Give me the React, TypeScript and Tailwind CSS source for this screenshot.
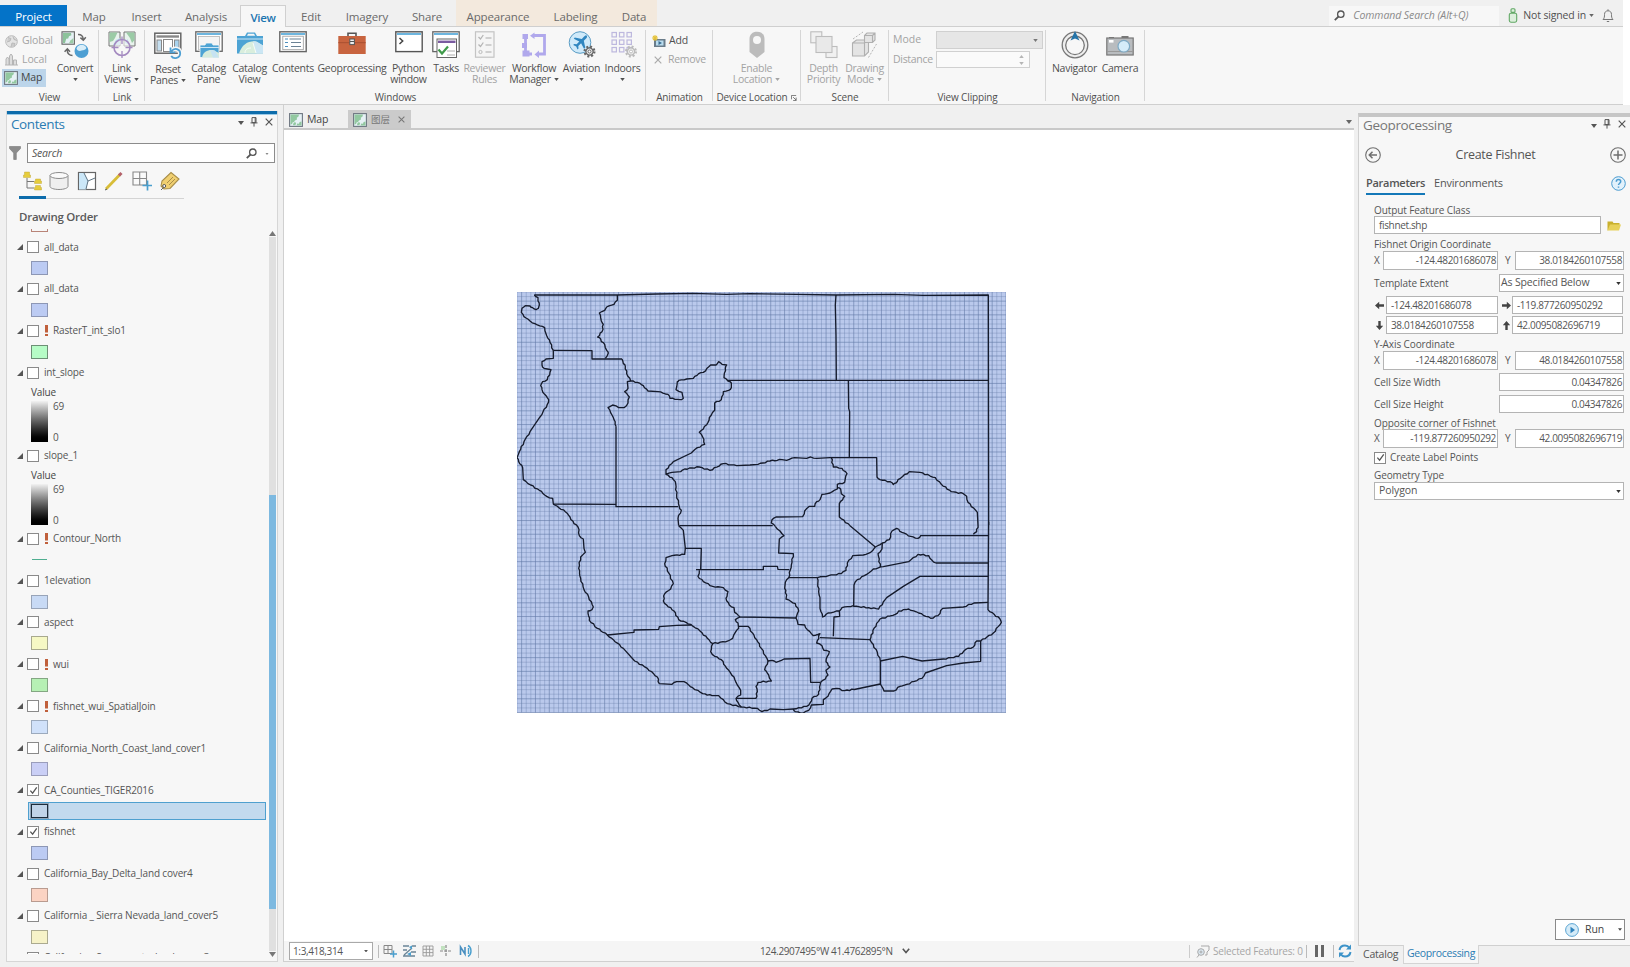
import type { ReactNode } from "react";

/* ---------- small shared glyphs ---------- */

const Caret = ({ className = "" }: { className?: string }) => (
  <svg viewBox="0 0 6 4" className={"w-[5px] h-[3px] shrink-0 " + className} fill="currentColor">
    <path d="M0 0h6L3 4z" />
  </svg>
);

const MapGlyph = ({ className = "size-[14px]" }: { className?: string }) => (
  <svg viewBox="0 0 14 14" className={"shrink-0 " + className}>
    <rect x=".6" y=".6" width="12.8" height="12.8" fill="#e6f1f5" stroke="#6d7680" strokeWidth="1.1" />
    <path d="M1.500 1.500h8.500l-.5 2-1.700 1.200.2 1.800-2 .9-1 1.600-1.500.5-.4 1.500-1.600.5z" fill="#92c8a0" />
    <path d="M12.500 8.500v4H7.500l.8-2 1.700.2.6-1.800z" fill="#92c8a0" />
    <path d="M4.300 10.500l1.500-1.400 1.400 1-.8 2.200H4z" fill="#92c8a0" />
  </svg>
);

const SearchGlyph = ({ className = "" }: { className?: string }) => (
  <svg viewBox="0 0 11 11" className={"size-[11px] shrink-0 " + className} fill="none" stroke="#555" strokeWidth="1.3">
    <circle cx="6.8" cy="4.2" r="3.2" />
    <path d="M4.4 6.6L.8 10.2" strokeWidth="1.8" />
  </svg>
);

const CloseGlyph = ({ className = "" }: { className?: string }) => (
  <svg viewBox="0 0 8 8" className={"size-[8px] shrink-0 " + className} stroke="currentColor" strokeWidth="1.2">
    <path d="M.7.7l6.6 6.6M7.3.7L.7 7.3" />
  </svg>
);

const PinGlyph = () => (
  <svg viewBox="0 0 8 10" className="w-[8px] h-[10px] shrink-0" fill="none" stroke="#555" strokeWidth="1">
    <path d="M2 .6h4v5H2zM5.2.6v5" />
    <path d="M.5 5.9h7M4 6v3.6" />
  </svg>
);

/* ---------- ribbon icons, 28 x 28 ---------- */

const Ic = ({ children }: { children: ReactNode }) => (
  <svg viewBox="0 0 28 28" className="size-[28px] shrink-0" fill="none">
    {children}
  </svg>
);

const Gear = ({ x, y, c }: { x: number; y: number; c: string }) => (
  <g transform={`translate(${x} ${y})`}>
    <circle r="4.8" stroke={c} strokeWidth="2.4" strokeDasharray="1.9 1.87" />
    <circle r="3.6" fill="#eee" stroke={c} strokeWidth="1.3" />
    <circle r="1.5" fill="#fff" stroke={c} strokeWidth="1" />
  </g>
);

const icons: Record<string, ReactNode> = {
  convert: (
    <Ic>
      <rect x="1" y=".8" width="12.4" height="12.4" fill="#e6f1f5" stroke="#666" strokeWidth="1.1" />
      <path d="M2 2h8l.4 2.2-2.4 1-.8 2.2-2 .4L4 12H2z" fill="#8cc29a" />
      <path d="M12.4 7v5.2H8l1.4-2.6z" fill="#9bcba6" />
      <path d="M17 3.4c3-.2 5 1.400 5.200 4.800M19.400 6.600l2.900 2.600 2.500-3" stroke="#666" strokeWidth="1.500" />
      <path d="M11.500 24.500c-3.200 0-5.300-2-5.200-5.600M3.600 20.800l2.800-3 2.600 2.900" stroke="#666" strokeWidth="1.500" />
      <circle cx="20.500" cy="20" r="7" fill="#4d9fd3" />
      <path d="M15.500 17.500c1.500-4.500 8-5 10-.5-1.500 2.600-3.600 2-5 2.600s-4 .6-5-2.100z" fill="#d8edf8" />
    </Ic>
  ),
  link: (
    <Ic>
      <path d="M1 1h11v14L1 15z" fill="#e9f3ee" stroke="#777" />
      <path d="M16 1h11v14H16z" fill="#e9f3ee" stroke="#777" />
      <path d="M1.500 1.500h8L7 7l-2 3-3.500 1zM18 1.500h8.500V9L24 12l-2-5z" fill="#9bcba6" />
      <path d="M5 14l3-5 4-2v7zM16.500 12l3-4 2 6z" fill="#b8dcf0" />
      <circle cx="14" cy="16.500" r="8" fill="#f7f7f7" fillOpacity=".6" stroke="#a48ac0" strokeWidth="1.600" />
      <path d="M14 5.500v7.500M14 20v7M3.500 16.500h7M17.500 16.500h7" stroke="#a48ac0" strokeWidth="1.300" />
    </Ic>
  ),
  reset: (
    <Ic>
      <rect x=".8" y="1.200" width="26" height="20" fill="#fff" stroke="#666" strokeWidth="1.500" />
      <path d="M2.500 4.500h22.500" stroke="#888" strokeWidth="2.400" />
      <rect x="3" y="8" width="4.500" height="11" fill="#c5dff0" stroke="#888" />
      <rect x="9.500" y="7.500" width="9" height="12" fill="#fff" stroke="#888" />
      <rect x="20.500" y="8" width="4.500" height="11" fill="#a9d3ee" stroke="#888" />
      <path d="M17.200 24c2.500 3.800 9 2.200 9-2.700 0-4.600-6-6-8.500-2.300" stroke="#f7f7f7" strokeWidth="4.500" />
      <path d="M17.200 24c2.500 3.800 9 2.200 9-2.700 0-4.600-6-6-8.500-2.300M16.500 15.500v4.800h4.800" stroke="#4d9fd3" strokeWidth="1.800" />
    </Ic>
  ),
  catalogPane: (
    <Ic>
      <rect x=".8" y=".8" width="26.400" height="19.500" fill="#fff" stroke="#666" strokeWidth="1.300" />
      <path d="M2 3h24" stroke="#6db5de" strokeWidth="2" />
      <rect x="3.500" y="5.500" width="21" height="13" fill="#f4f4f4" stroke="#aaa" strokeWidth=".7" />
      <path d="M5 14h5l1-2h6l1 2h6v12.500H5z" fill="#4da3d4" stroke="#f7f7f7" strokeWidth=".8" />
      <path d="M5 16.500h19" stroke="#cde6f4" />
      <path d="M7 26.500c1-6 6-8 11-7.500l6 3v4.500z" fill="#d6ebdb" />
      <path d="M15 19l3 7.500h6l-4-7z" fill="#c6e3f2" />
    </Ic>
  ),
  catalogView: (
    <Ic>
      <path d="M1 5h8l2-3.500h8L21 5h6v17.500H1z" fill="#4da3d4" />
      <path d="M11 4.800l1-2h6l1.200 2z" fill="#f7f7f7" />
      <path d="M1 8h26" stroke="#cde6f4" strokeWidth="1" />
      <path d="M3 22.500C6 13 13 9.500 20 10.500l7 4v8z" fill="#d9eedd" />
      <path d="M17 10.200l3.500 12.300H27v-8l-6-3.800z" fill="#cbe6f4" />
      <path d="M17 12l3 10M9 22c0-4 3-5 6-5" stroke="#fff" strokeWidth=".8" />
    </Ic>
  ),
  contents: (
    <Ic>
      <rect x=".8" y=".8" width="26.400" height="19.800" fill="#fff" stroke="#666" strokeWidth="1.400" />
      <path d="M2 3h24" stroke="#6db5de" strokeWidth="2" />
      <rect x="3.800" y="5.200" width="20.500" height="13.500" stroke="#9a9a9a" strokeWidth=".8" />
      <path d="M6 8h3M6 11.500h3M6 15.500h3" stroke="#4d8fbd" strokeWidth="1.200" />
      <path d="M10.500 8H22M12 11.500h10M12 15.500h10" stroke="#6b8294" strokeWidth="1.200" />
    </Ic>
  ),
  toolbox: (
    <Ic>
      <path d="M10 5V2.200h8V5" stroke="#555" strokeWidth="1.600" />
      <rect x=".3" y="5" width="27.400" height="18" fill="#c8643f" />
      <path d="M.3 11.700h27.400" stroke="#a84f30" strokeWidth="1" />
      <rect x="11.800" y="8" width="4.600" height="5.600" fill="#eee" stroke="#555" />
      <path d="M12 10.500h4" stroke="#555" />
    </Ic>
  ),
  python: (
    <Ic>
      <rect x=".8" y=".8" width="26.400" height="19.800" fill="#fff" stroke="#555" strokeWidth="1.400" />
      <path d="M2 3h24" stroke="#6db5de" strokeWidth="2" />
      <path d="M4.500 7l3.200 3-3.200 3" stroke="#444" strokeWidth="1.500" />
    </Ic>
  ),
  tasks: (
    <Ic>
      <rect x=".8" y=".8" width="26.400" height="19.800" fill="#fff" stroke="#666" strokeWidth="1.300" />
      <path d="M2 3h24" stroke="#6db5de" strokeWidth="2" />
      <rect x="5" y="8" width="19.500" height="18.500" fill="#fff" stroke="#666" />
      <path d="M6 10.800h17.500" stroke="#7a5ba0" strokeWidth="2.400" />
      <path d="M6.500 18.500l3.500 4 6-7" stroke="#3f9a4a" strokeWidth="2.200" />
      <path d="M15 20h8M15 24h8" stroke="#999" strokeWidth=".8" />
    </Ic>
  ),
  reviewer: (
    <Ic>
      <rect x="4.500" y=".8" width="18.500" height="25.400" fill="#f5f5f5" stroke="#c4c4c4" strokeWidth="1.200" />
      <path d="M7.500 6l2 2 2.800-4M7.500 13.500l2 2 2.800-4" stroke="#b5b5b5" strokeWidth="1.300" />
      <circle cx="9.500" cy="21" r="1.600" stroke="#bbb" />
      <path d="M14.500 7h6M14.500 14h6M14.500 21h6" stroke="#c2c2c2" strokeWidth="1.300" />
    </Ic>
  ),
  workflow: (
    <Ic>
      <g fill="#b0a8ec">
        <rect x="2.500" y="3" width="5.500" height="5" />
        <rect x="2" y="12" width="5" height="5" />
        <path d="M2.500 19.500h7v6h-7zM14.500 1.500v6.500L10 4.800zM19 19.500l-4.500 4 4.500 3.500z" />
      </g>
      <path d="M5.500 6v16M7 23h5M14 4.500h10.500v18.500H18" stroke="#b0a8ec" strokeWidth="2.800" />
    </Ic>
  ),
  aviation: (
    <Ic>
      <circle cx="12" cy="11.500" r="10.800" fill="#cfeafa" stroke="#5a9cc4" strokeWidth="1" />
      <path d="M18.500 4.500c1 1 .6 2-.4 3l-2.300 2.300 1.500 7-1.300 1-2.900-5.500-2.800 2.700.2 2.500-1 .9-1.300-3-3-1.300.9-1 2.500.2 2.700-2.700L5.800 7.700l1-1.300 7 1.500 2.300-2.300c.9-1 1.700-1.700 2.400-1.100z" fill="#2f86c0" />
      <Gear x={21.500} y={20.500} c="#666" />
    </Ic>
  ),
  indoors: (
    <Ic>
      <g stroke="#bdb8de" strokeWidth="1.200">
        {[1.500, 9, 16.500].map((y) => [3, 10.500, 18].map((x) => <rect key={x + "-" + y} x={x} y={y} width="4.400" height="4.400" />))}
      </g>
      <Gear x={22} y={20.500} c="#bbb" />
    </Ic>
  ),
  location: (
    <Ic>
      <path d="M6.500 8C6.500 3.500 9.500.8 14 .8s7.500 2.700 7.500 7.200V21L14 27l-7.500-6z" fill="#bcbcbc" />
      <circle cx="14" cy="9" r="4" fill="#f7f7f7" />
    </Ic>
  ),
  depth: (
    <Ic>
      <g fill="#f1f1f1" stroke="#bdbdbd" strokeWidth="1.100">
        <rect x=".8" y=".8" width="11" height="11" />
        <rect x="16" y="15.500" width="11" height="11" />
        <rect x="6" y="5.500" width="16" height="16" fill="#e9e9e9" />
      </g>
    </Ic>
  ),
  drawing: (
    <Ic>
      <g fill="#e4e4e4" stroke="#b0b0b0" strokeWidth="1.100">
        <path d="M1.500 12l4-3h12v12l-4 4h-12zM1.500 12h12v13M13.500 12l4-3" />
        <path d="M13.500 4.500L16 2h8v7l-2.500 2.500h-8zM13.500 4.500h8v7M21.500 4.500L24 2" />
      </g>
      <path d="M2 8L12 1M17.500 26.500L25.500 13" stroke="#b4b4b4" strokeDasharray="2 1.500" />
    </Ic>
  ),
  navigator: (
    <Ic>
      <circle cx="14" cy="14" r="12.800" fill="#eee" stroke="#777" strokeWidth="1.300" />
      <circle cx="14" cy="14.300" r="9.300" fill="#f7f7f7" stroke="#777" strokeWidth="1.300" />
      <path d="M14 0l4.500 9.500L14 7.500l-4.500 2z" fill="#2574a8" />
    </Ic>
  ),
  camera: (
    <Ic>
      <path d="M3 6h5v2H3zM15.500 5h7v3h-7z" fill="#777" />
      <rect x=".8" y="7" width="26.400" height="17" fill="#b9bcbf" stroke="#777" strokeWidth="1.200" />
      <path d="M1 20.500h26" stroke="#999" />
      <rect x="3" y="9" width="4.500" height="2.600" fill="#fff" />
      <circle cx="17.800" cy="15.200" r="5.800" fill="#d5ecf9" stroke="#7ea9c4" strokeWidth="1.200" />
    </Ic>
  ),
};

/* ---------- ribbon ---------- */

function BigButton({ icon, lines, w, drop, dim }: { icon: string; lines: string[]; w: string; drop?: boolean; dim?: boolean }) {
  return (
    <div className={"flex flex-col items-center shrink-0 text-[10.500px] leading-[11px] tracking-[-0.280px] " + w + (dim ? " text-[#a3a3a3]" : " text-[#505050]")}>
      {icons[icon]}
      <div className="mt-[4px] whitespace-nowrap text-center">{lines[0]}</div>
      <div className="flex h-[11px] items-center gap-[3px] whitespace-nowrap">
        {lines[1] && <span>{lines[1]}</span>}
        {drop && <Caret />}
      </div>
    </div>
  );
}

function Group({ title, w, children, launcher }: { title: string; w: string; children: ReactNode; launcher?: boolean }) {
  return (
    <div className={"relative flex flex-col shrink-0 pt-[4px] " + w}>
      <div className="flex h-[60px]">{children}</div>
      <div className="flex h-[13px] items-center justify-center gap-[4px] whitespace-nowrap text-[10px] tracking-[-0.150px] text-[#505050]">
        {title}
        {launcher && (
          <svg viewBox="0 0 7 7" className="size-[6px]" fill="none" stroke="#666">
            <path d="M.5 5V.5H6M2.500 2.500l3.500 3.500M6 3v3.500H2.500" />
          </svg>
        )}
      </div>
      <div className="absolute right-0 top-[3px] h-[71px] w-px bg-[#d6d6d6]" />
    </div>
  );
}

const tabs: [string, string][] = [
  ["Map", "w-[54px]"],
  ["Insert", "w-[51px]"],
  ["Analysis", "w-[68px]"],
  ["View", "w-[46px] h-[22px] bg-[#f7f7f7] border border-b-0 border-[#d0d0d0] text-[#1b75b0] font-semibold tracking-[-0.400px] relative"],
  ["Edit", "w-[50px]"],
  ["Imagery", "w-[62px]"],
  ["Share", "w-[58px]"],
];

function Ribbon() {
  return (
    <div className="h-[105px] w-[1623px]">
      <div className="flex h-[27px] items-end border-b border-[#cfcfcf] text-[11.500px] tracking-[-0.150px] text-[#6a6a6a]">
        <div className="flex h-[21px] w-[67px] shrink-0 items-center justify-center bg-[#0473c8] pt-[2px] font-medium text-white">Project</div>
        {tabs.map(([t, c]) => (
          <div key={t} className={"flex h-[21px] shrink-0 items-center justify-center pt-[2px] " + c + (t === "View" ? " -mb-px" : "")}>
            {t}
          </div>
        ))}
        <div className="flex h-[26px] items-end bg-[#f3e9dd]">
          <div className="flex h-[21px] w-[84px] items-center justify-center pt-[2px]">Appearance</div>
          <div className="flex h-[21px] w-[71px] items-center justify-center pt-[2px]">Labeling</div>
          <div className="flex h-[21px] w-[46px] items-center justify-center pt-[2px]">Data</div>
        </div>
        <div className="ml-auto flex h-[22px] items-center pr-[9px] pt-px">
          <div className="flex h-[20px] w-[170px] items-center gap-[8px] bg-[#f7f7f7] pl-[5px] text-[10.500px] italic tracking-[-0.080px] text-[#8a8a8a]">
            <SearchGlyph />
            Command Search (Alt+Q)
          </div>
          <svg viewBox="0 0 10 15" className="ml-[9px] h-[15px] w-[10px]" fill="#dcefdc" stroke="#62a866" strokeWidth="1.100">
            <rect x="3" y=".8" width="4" height="3.600" rx="1" />
            <rect x="1.300" y="5.200" width="7.400" height="9" rx="1.600" />
          </svg>
          <span className="ml-[5px] text-[10.500px] text-[#505050]">Not signed in</span>
          <Caret className="ml-[3px] text-[#666]" />
          <svg viewBox="0 0 12 14" className="ml-[8px] h-[14px] w-[12px]" fill="none" stroke="#777" strokeWidth="1">
            <path d="M1 10.500h10c-1.500-1.500-1.500-3-1.500-5C9.500 3 8 1.800 6 1.800S2.500 3 2.500 5.500c0 2 0 3.500-1.500 5zM6 .3v1.500M4.800 12.500h2.400" />
          </svg>
        </div>
      </div>
      <div className="flex h-[78px] border-b border-[#cfcfcf] bg-[#f7f7f7]">
        <Group title="View" w="w-[99px]">
          <div className="ml-[2px] flex w-[49px] flex-col pt-px text-[10.500px] tracking-[-0.100px] text-[#a3a3a3]">
            <div className="flex h-[18px] items-center gap-[4px] pl-[3px]">
              <svg viewBox="0 0 13 13" className="size-[13px] shrink-0" fill="#e4e4e4" stroke="#bbb">
                <circle cx="6.500" cy="6.500" r="5.800" />
                <path d="M3 2.500l3 1-1 2.500-3 1M8 1.500l1 3 3 1M6 12l1-4 3 .5-1 3" fill="#ccc" />
              </svg>
              Global
            </div>
            <div className="flex h-[19px] items-center gap-[4px] pl-[3px]">
              <svg viewBox="0 0 13 13" className="size-[13px] shrink-0" fill="#ddd" stroke="#b5b5b5">
                <path d="M1 12V6l1.500-2L4 6v6M4.500 12V3l1.500-2 1.500 2v9M8.500 12V7h3v5M0 12h13" />
              </svg>
              Local
            </div>
            <div className="flex h-[18px] w-[44px] items-center gap-[3px] bg-[#bcd5ea] pl-[2px] text-[#444]">
              <MapGlyph />
              Map
            </div>
          </div>
          <BigButton icon="convert" lines={["Convert"]} w="w-[48px]" drop />
        </Group>
        <Group title="Link" w="w-[46px]">
          <BigButton icon="link" lines={["Link", "Views"]} w="w-[45px]" drop />
        </Group>
        <Group title="Windows" w="w-[501px]">
          <div className="flex pl-[2px]">
            <div className="pt-px"><BigButton icon="reset" lines={["Reset", "Panes"]} w="w-[42px]" drop /></div>
            <BigButton icon="catalogPane" lines={["Catalog", "Pane"]} w="w-[39px]" />
            <BigButton icon="catalogView" lines={["Catalog", "View"]} w="w-[43px]" />
            <BigButton icon="contents" lines={["Contents"]} w="w-[44px]" />
            <BigButton icon="toolbox" lines={["Geoprocessing"]} w="w-[74px]" />
            <BigButton icon="python" lines={["Python", "window"]} w="w-[39px]" />
            <BigButton icon="tasks" lines={["Tasks"]} w="w-[36px]" />
            <BigButton icon="reviewer" lines={["Reviewer", "Rules"]} w="w-[41px]" dim />
            <BigButton icon="workflow" lines={["Workflow", "Manager"]} w="w-[58px]" drop />
            <BigButton icon="aviation" lines={["Aviation"]} w="w-[37px]" drop />
            <BigButton icon="indoors" lines={["Indoors"]} w="w-[45px]" drop />
          </div>
        </Group>
        <Group title="Animation" w="w-[67px]">
          <div className="flex flex-col pl-[6px] pt-px text-[10.500px] tracking-[-0.100px] text-[#505050]">
            <div className="flex h-[18px] items-center gap-[3px]">
              <svg viewBox="0 0 14 13" className="h-[13px] w-[14px]">
                <rect x="2" y="4" width="11.500" height="8" fill="#6a7c8a" />
                <rect x="4" y="5.500" width="7.500" height="5" fill="#b9dcef" />
                <path d="M6.500 6l3.500 2-3.500 2z" fill="#3a6d92" />
                <path d="M3 0v6M0 3h6M1 1l4 4M5 1L1 5" stroke="#e5c33c" strokeWidth="1.100" />
              </svg>
              Add
            </div>
            <div className="flex h-[19px] items-center gap-[6px] pl-[2px] tracking-[-0.300px] text-[#a3a3a3]">
              <CloseGlyph className="text-[#aaa]" />
              Remove
            </div>
          </div>
        </Group>
        <Group title="Device Location" w="w-[88px]" launcher>
          <BigButton icon="location" lines={["Enable", "Location"]} w="w-[87px]" drop dim />
        </Group>
        <Group title="Scene" w="w-[88px]">
          <div className="flex pl-[2px]">
            <BigButton icon="depth" lines={["Depth", "Priority"]} w="w-[41px]" dim />
            <BigButton icon="drawing" lines={["Drawing", "Mode"]} w="w-[41px]" drop dim />
          </div>
        </Group>
        <Group title="View Clipping" w="w-[157px]">
          <div className="flex flex-col gap-[2px] pl-[4px] text-[10.500px] text-[#a3a3a3]">
            <div className="flex h-[18px] items-center">
              <span className="w-[43px]">Mode</span>
              <div className="flex h-[18px] w-[107px] items-center justify-end border border-[#d0d0d0] bg-[#e6e6e6] pr-[4px]"><Caret className="text-[#777]" /></div>
            </div>
            <div className="flex h-[17px] items-center">
              <span className="w-[43px] tracking-[-0.300px]">Distance</span>
              <div className="flex h-[17px] w-[94px] flex-col items-end justify-center gap-[4px] border border-[#d0d0d0] bg-[#fafafa] pr-[5px]">
                <Caret className="rotate-180 text-[#b5b5b5]" />
                <Caret className="text-[#b5b5b5]" />
              </div>
            </div>
          </div>
        </Group>
        <Group title="Navigation" w="w-[99px]">
          <div className="flex pl-[5px]">
            <BigButton icon="navigator" lines={["Navigator"]} w="w-[47px]" />
            <BigButton icon="camera" lines={["Camera"]} w="w-[44px]" />
          </div>
        </Group>
      </div>
    </div>
  );
}

/* ---------- contents pane ---------- */

type Layer = { name: string; fill?: string; kind?: "ramp" | "line" | "selected"; warn?: boolean; on?: boolean };

const layers: Layer[] = [
  { name: "all_data", fill: "bg-[#bccbf3] border-[#8d97b5]" },
  { name: "all_data", fill: "bg-[#bccbf3] border-[#8d97b5]" },
  { name: "RasterT_int_slo1", fill: "bg-[#b6fcc6] border-[#6d8f75]", warn: true },
  { name: "int_slope", kind: "ramp" },
  { name: "slope_1", kind: "ramp" },
  { name: "Contour_North", kind: "line", warn: true },
  { name: "1elevation", fill: "bg-[#c8daf5] border-[#98a4b8]" },
  { name: "aspect", fill: "bg-[#f6f8c4] border-[#a8a98e]" },
  { name: "wui", fill: "bg-[#b6f0b4] border-[#84a783]", warn: true },
  { name: "fishnet_wui_SpatialJoin", fill: "bg-[#d0e1fa] border-[#9caabd]", warn: true },
  { name: "California_North_Coast_land_cover1", fill: "bg-[#cacff6] border-[#9a9dbb]" },
  { name: "CA_Counties_TIGER2016", kind: "selected", on: true },
  { name: "fishnet", fill: "bg-[#bccbf3] border-[#8d97b5]", on: true },
  { name: "California_Bay_Delta_land cover4", fill: "bg-[#fbd3c3] border-[#b99b90]" },
  { name: "California _ Sierra Nevada_land_cover5", fill: "bg-[#f6f2c8] border-[#abaa90]" },
  { name: "California _ Sacramento_land_cover3", fill: "bg-[#bccbf3] border-[#8d97b5]" },
];

const Check = ({ on }: { on?: boolean }) => (
  <span className="flex size-[12px] shrink-0 items-center justify-center border border-[#8a8a8a] bg-white">
    {on && (
      <svg viewBox="0 0 10 10" className="size-[9px]" fill="none" stroke="#555" strokeWidth="1.400">
        <path d="M1.500 5.200l2.500 2.800L8.600 1.500" />
      </svg>
    )}
  </span>
);

function LayerItem({ l }: { l: Layer }) {
  return (
    <div className="shrink-0">
      <div className="flex h-[21px] items-center pl-[10px]">
        <svg viewBox="0 0 6 6" className="mr-[4px] size-[6px] shrink-0"><path d="M6 0v6H0z" fill="#555" /></svg>
        <Check on={l.on} />
        {l.warn && (
          <svg viewBox="0 0 3 11" className="ml-[6px] h-[11px] w-[3px]" fill="#c0603c">
            <path d="M0 0h3v7.500H0zM0 9h3v2H0z" />
          </svg>
        )}
        <span className="ml-[5px] whitespace-nowrap">{l.name}</span>
      </div>
      {l.kind === "ramp" ? (
        <div className="h-[62px] pl-[24px]">
          <div className="h-[18px] pt-px leading-[16px] text-[#444]">Value</div>
          <div className="flex h-[41px]">
            <div className="w-[17px] bg-linear-to-b from-[#f2f2f2] to-black" />
            <div className="ml-[5px] flex flex-col justify-between leading-[10px]"><span>69</span><span>0</span></div>
          </div>
        </div>
      ) : (
        <div className={"flex h-[20.900px] items-center " + (l.kind === "line" ? "pl-[25px]" : "pl-[21px]")}>
          {l.kind === "line" && <div className="h-[1.500px] w-[15px] bg-[#4fae90]" />}
          {l.kind === "selected" && (
            <div className="flex h-[18px] w-[238px] items-center border border-[#4fa0cf] bg-[#c3daee] pl-[2px]">
              <div className="h-[14px] w-[17px] border-[1.500px] border-[#1c2c3a] bg-[#c0d4e8] outline outline-[#1c2c3a]/30" />
            </div>
          )}
          {l.fill && <div className={"ml-[3px] h-[14px] w-[17px] border " + l.fill} />}
        </div>
      )}
    </div>
  );
}

function PaneButtons({ className = "" }: { className?: string }) {
  return (
    <div className={"flex items-center text-[#555] " + className}>
      <Caret className="mt-[3px] w-[6px]! h-[4px]!" />
      <span className="ml-[6px]"><PinGlyph /></span>
      <CloseGlyph className="ml-[7px]" />
    </div>
  );
}

function Contents() {
  return (
    <div className="flex h-[851px] w-[272px] shrink-0 flex-col overflow-hidden border border-t-0 border-[#d6d6d6] bg-[#f7f7f7] text-[10px] tracking-[-0.150px] text-[#555]">
      <div className="h-[4px] w-full shrink-0 border-b border-[#9bcbe8] bg-[#0d6cab]" />
      <div className="flex h-[18px] shrink-0 items-center justify-between pl-[4px] pr-[4px]">
        <span className="text-[13.500px] tracking-[-0.400px] text-[#2b7cb3]">Contents</span>
        <PaneButtons className="-mt-[5px]" />
      </div>
      <div className="mt-[10px] flex h-[20px] shrink-0 items-center pl-[2px]">
        <svg viewBox="0 0 12 14" className="h-[14px] w-[12px]"><path d="M.5.500h11v2L7.300 7v6.500H4.700V7L.5 2.500z" fill="#8c8c8c" stroke="#777" strokeWidth=".6" /></svg>
        <div className="ml-[6px] flex h-[20px] w-[248px] items-center border border-[#8c8c8c] bg-white pl-[4px] pt-px text-[10.500px] italic tracking-[-0.200px] text-[#555]">
          Search
          <SearchGlyph className="ml-auto" />
          <Caret className="ml-[8px] mr-[5px] w-[4px]! h-[2px]! text-[#888]" />
        </div>
      </div>
      <div className="mt-[8px] flex h-[28px] w-[165px] shrink-0 items-start ml-[12px] border-b border-[#d4d4d4]">
        <div className="-mb-px flex h-[28px] w-[27px] justify-center border-b-[3px] border-[#0d6cab]">
          <svg viewBox="0 0 20 20" className="size-[20px]">
            <path d="M4 7v10h7M4 10.500h7" stroke="#777" fill="none" />
            <g fill="#e6cd3d" stroke="#b89f2c" strokeWidth=".4">
              <path d="M1.500 1h5v3h1v2.500H.5V4h1zM12.500 8h5v2h1v2.500h-7V10h1zM12.500 14.500h5v2h1V19h-7v-2.500h1z" />
            </g>
          </svg>
        </div>
        <svg viewBox="0 0 20 20" className="ml-[3px] size-[20px]" fill="#efefef" stroke="#8c8c8c">
          <path d="M1 4.500v11c0 1.500 4 3 9 3s9-1.500 9-3v-11" />
          <ellipse cx="10" cy="4.500" rx="9" ry="3" fill="#fafafa" />
        </svg>
        <svg viewBox="0 0 20 20" className="ml-[8px] size-[20px]" fill="none">
          <rect x="1.500" y="1.500" width="17" height="17" fill="#fff" stroke="#666" strokeWidth="1.200" />
          <path d="M2 2h5l4 8-2 8.500H2z" fill="#cbe7f8" />
          <path d="M7 2l4 8M18 7l-7 3-2 8M11 10" stroke="#5d7282" />
        </svg>
        <svg viewBox="0 0 20 20" className="ml-[7px] size-[20px]">
          <path d="M2 18L16 3.500" stroke="#d8bd38" strokeWidth="2.800" />
          <path d="M15 4.500L17.500 2" stroke="#b3616b" strokeWidth="3" />
          <path d="M1 19l2-1" stroke="#555" />
        </svg>
        <svg viewBox="0 0 20 20" className="ml-[8px] size-[20px]" fill="none">
          <path d="M1 1h13.500v13H1zM7.700 1v13M1 7.500h13.500" stroke="#888" strokeWidth="1.100" fill="#fafafa" />
          <path d="M15.500 9.500v10M10.500 14.500h10" stroke="#4a9fce" strokeWidth="1.700" />
        </svg>
        <svg viewBox="0 0 20 20" className="ml-[8px] size-[20px]" fill="none">
          <path d="M11 1.500l8 6.500-9 9.500-6 .5-3-3 1-5z" fill="#f0cf70" stroke="#a88e4a" strokeWidth="1.100" />
          <path d="M7 12l6-6M9 14l6-6" stroke="#a88e4a" />
          <circle cx="4.200" cy="15" r="1.500" fill="#fff" stroke="#555" />
          <path d="M4 16l-3 3" stroke="#666" />
        </svg>
      </div>
      <div className="mt-[10px] h-[18px] shrink-0 pl-[12px] text-[11.500px] font-semibold leading-[16px] tracking-[-0.250px] text-[#5a5a5a]">Drawing Order</div>
      <div className="flex h-[730px] shrink-0">
        <div className="flex h-[727px] w-[262px] flex-col overflow-hidden">
          <div className="ml-[24px] mt-[2px] h-[3px] w-[17px] shrink-0 border border-t-0 border-[#b98478]" />
          <div className="h-[4.500px] shrink-0" />
          {layers.map((l, i) => (
            <LayerItem key={i} l={l} />
          ))}
        </div>
        <div className="flex w-[7px] flex-col items-center">
          <svg viewBox="0 0 7 5" className="mt-[4px] h-[5px] w-[7px] shrink-0"><path d="M3.500 0L7 5H0z" fill="#777" /></svg>
          <div className="mt-[1px] flex w-[7px] flex-1 flex-col bg-[#e0e0e0] pt-[258px]"><div className="h-[414px] bg-[#7db9e0]" /></div>
          <svg viewBox="0 0 7 5" className="mt-[1px] h-[5px] w-[7px] shrink-0"><path d="M0 0h7L3.500 5z" fill="#777" /></svg>
        </div>
      </div>
    </div>
  );
}

/* ---------- map ---------- */

const north = [
  "73,30 84,38 84,48 88,60 85,70 78,74 68,68 60,63 46,62 36,70 34,82 42,95 60,108 82,120 104,128 108,146 120,172 130,196",
  "130,196 246,197 246,222 336,222",
  "130,196 130,220 108,222 96,230 96,240 102,250 112,252 123,254 120,262 112,284 98,290 92,302 96,314 104,328 116,344 112,358 90,396 60,440 42,470 28,500 21,518 26,530 38,548 40,584 62,600 88,616 110,634 128,640 130,657 318,658",
  "318,424 318,665 504,665",
  "73,30 322,30 440,27 550,25 650,28 720,26 860,28 978,30 1150,28 1240,31 1435,30 1436,720",
  "322,30 322,46 312,58 290,66 284,76 268,84 272,98 274,108 280,118 276,140 263,156 272,162 274,170 284,178 290,196 295,204 286,220",
  "336,222 340,236 346,244 350,266 362,288 382,292 400,302 414,318 444,320 474,328 480,340 510,344 520,340 516,322 498,314 502,290 506,286 530,282 550,280 566,266 580,262 602,240 618,240 626,230 636,238 650,240 646,250 642,278 654,288 664,294 664,308 656,316 640,320 634,344 614,354 614,376 598,398 594,412 580,432 568,442 578,456 584,478 562,488 544,504 490,530 468,554 468,568 486,562 512,560 524,552 568,546 600,556 640,536 680,542 720,540 744,538 780,528 816,524 830,526 854,518 890,520 902,516 920,520 960,518 1100,518 1101,576 1110,584 1140,590 1150,599 1158,594 1164,584 1198,560 1230,562 1276,578 1294,598 1324,620 1360,626 1370,634 1374,652 1402,682 1404,720 1400,740 1390,748",
  "654,286 1435,286",
  "362,288 352,290 354,310 344,320 358,336 354,354 342,368 326,368 308,360 294,368 306,390 312,404 318,424",
  "468,568 486,578 496,590 500,630 508,665 514,676 504,700 506,722",
  "978,30 976,60 978,150 979,286",
  "1015,286 1016,370 1019,380 1018,517",
  "964,518 970,546 996,550 1011,566 1006,580 1004,592 982,598 982,612 960,624 936,628 930,644 920,650 914,664 898,664 884,678 878,695 798,696 786,704 784,714 796,724",
  "982,608 992,612 994,626 1004,634 998,644 988,656 988,696 1020,722 1096,786",
];

const south = [
  "130,27 134,30 166,50 180,66 192,86 204,96 208,122 220,132 222,160 226,172 212,186 206,220 212,250 222,284 236,306 250,336 246,344 234,348 238,376 262,400 292,420 310,434 340,460 374,498 412,520 442,546 448,566 486,568 500,560 522,560 548,578 578,596 606,602 626,602 640,614 652,626 694,636 742,640 756,650 780,642 820,644 850,642 866,638 890,634 900,624 906,610 926,598 932,562",
  "850,642 856,650 880,654 896,646 904,630 940,628 940,614 954,604 966,582 980,580 1004,587 1040,582 1111,567 1122,588 1152,588 1170,574 1190,568 1236,550 1246,534 1310,512 1360,504 1412,499 1412,438",
  "506,92 520,106 526,160 574,160 572,224",
  "508,92 788,92",
  "526,160 524,178 486,182 468,188 464,206 476,234 490,266 482,282 464,296 460,318 470,330 492,348 506,374 542,388 570,408 592,430 608,446 602,470 614,484 634,494 650,520 672,546 682,570 692,586 692,600 678,610 684,622 694,636",
  "678,610 738,610 742,590 738,574 744,562 784,558 776,540 764,524 774,498",
  "292,420 372,412 372,405 446,403 448,395 500,391 544,390",
  "558,224 760,224 760,214 802,214 804,223 838,224",
  "568,226 564,244 580,260 608,274 640,278 654,290 648,310 658,330 672,338 674,352 690,366 858,369",
  "690,366 676,374 684,384 686,400 676,412 668,430 654,438 608,446",
  "686,394 714,394 740,434 754,460 774,498 786,496 798,502 822,492 900,490 902,562 932,562",
  "796,94 810,108 822,122 808,132 806,174 850,176 844,210 836,248 826,262 824,280 830,300 828,312 856,326 866,348 858,369 864,388 884,390 892,404 910,422 930,416 920,444 936,452 942,466 958,470 952,484 948,500 960,516 948,526 954,540 946,552 932,562",
  "836,248 922,248 926,290 930,308 930,340 938,366 954,354 988,348 996,338 1030,332",
  "922,248 956,242 994,236 1008,226 1012,204 1028,182 1060,180 1082,172 1096,156 1117,144 1138,134 1146,108 1160,100 1176,112 1202,124 1224,130 1232,122 1434,122",
  "1117,144 1116,162 1104,176 1111,216",
  "1434,204 1278,204 1266,196 1256,182 1224,178 1196,200 1120,215 1090,222 1070,238 1042,254 1032,270 1031,334 1076,338 1106,342 1130,308 1180,274 1230,244 1434,244",
  "988,348 989,364 972,366 970,424",
  "930,428 1080,434 1092,400 1110,372 1156,358 1166,348 1196,342 1226,354 1262,370 1284,362 1298,340 1360,336 1392,324 1434,322",
  "1080,434 1102,472 1111,498 1111,567",
  "1111,498 1178,484 1236,498 1300,492 1346,484 1366,464 1390,456 1400,438 1412,438 1450,414 1474,382 1470,372 1434,344 1436,80",
];

/* Adds a slight meander to natural boundaries; surveyed (axis-aligned) edges stay straight. */
function meander(points: string): string {
  const p = points.split(" ").map((s) => s.split(",").map(Number));
  const out = ["M" + p[0].join(" ")];
  for (let i = 1; i < p.length; i++) {
    const [x0, y0] = p[i - 1];
    const [x1, y1] = p[i];
    const dx = x1 - x0;
    const dy = y1 - y0;
    const len = Math.hypot(dx, dy);
    if (Math.abs(dx) > 3 && Math.abs(dy) > 3 && len < 50) {
      const n = Math.max(2, Math.round(len / 8));
      for (let k = 1; k < n; k++) {
        const off = Math.sin(x0 * 1.7 + y0 * 2.3 + k * 2.4) * 1.8;
        out.push(`L${(x0 + (dx * k) / n - (dy / len) * off).toFixed(1)} ${(y0 + (dy * k) / n + (dx / len) * off).toFixed(1)}`);
      }
    }
    out.push(`L${x1} ${y1}`);
  }
  return out.join("");
}

const COLS = 106;
const ROWS = 92;

function Fishnet() {
  const w = 489;
  const h = 420.500;
  return (
    <svg viewBox="0 0 489 421" className="h-[421px] w-[489px]">
      <rect width={w} height={h} fill="#bac9ec" />
      <g stroke="#6279a6" strokeWidth="1">
        {Array.from({ length: COLS + 1 }, (_, i) => (
          <path key={"c" + i} d={`M${(i * w) / COLS} 0V${h}`} strokeOpacity={i % 3 === 1 ? 0.6 : 0.34} />
        ))}
        {Array.from({ length: ROWS + 1 }, (_, i) => (
          <path key={"r" + i} d={`M0 ${(i * h) / ROWS}H${w}`} strokeOpacity={i % 3 === 2 ? 0.6 : 0.32} />
        ))}
      </g>
      <g transform="translate(-7 -7) scale(.33333)" fill="none" stroke="#151b2c" strokeWidth="4" strokeLinejoin="round">
        {north.map((s, i) => (
          <path key={i} d={meander(s)} />
        ))}
        <g transform="translate(0 630)">
          {south.map((s, i) => (
            <path key={i} d={meander(s)} />
          ))}
        </g>
      </g>
    </svg>
  );
}

function MapView() {
  return (
    <div className="ml-[5px] flex h-[857px] w-[1071px] shrink-0 flex-col border-b border-l border-[#d0d0d0]">
      <div className="flex h-[25px] shrink-0 items-end border-b-2 border-[#c9c9c9] text-[10.500px] tracking-[-0.150px] text-[#444]">
        <div className="flex h-[18px] w-[64px] items-center gap-[4px] pl-[5px] pt-px">
          <MapGlyph />
          Map
        </div>
        <div className="flex h-[18px] w-[63px] items-center bg-[#cbcbcb] pl-[5px] pt-px text-[#777]">
          <MapGlyph />
          <span className="ml-[4px] font-['Noto_Sans_CJK_SC',sans-serif] text-[9.500px] tracking-normal">图层</span>
          <CloseGlyph className="ml-[8px] size-[7px]!" />
        </div>
        <Caret className="mb-[4px] ml-auto mr-[2px] w-[6px]! h-[4px]! text-[#666]" />
      </div>
      <div className="h-[811px] shrink-0 bg-white pl-[233px] pt-[162px]">
        <Fishnet />
      </div>
      <div className="flex h-[20px] items-center bg-[#f5f5f5] pl-[5px] text-[10px] tracking-[-0.350px] text-[#555]">
        <div className="flex h-[18px] w-[84px] items-center justify-between border border-[#a9a9a9] bg-white pl-[3px] pr-[4px]">
          1:3,418,314
          <Caret className="w-[4px]! h-[2.500px]!" />
        </div>
        <div className="ml-[5px] h-[13px] w-px bg-[#bbb]" />
        <svg viewBox="0 0 92 14" className="ml-[4px] h-[14px] w-[92px]" fill="none">
          <path d="M1 1.500h8v8H1zM5 1.500v8M1 5.500h8" stroke="#888" />
          <path d="M10.500 6.500v7M7 10h7" stroke="#4a9fce" strokeWidth="1.500" />
          <path d="M20 2h6M20 12h12M21 11l8-7M29 2h4M20 6h4M28 8h5" stroke="#6a8496" strokeWidth="1.300" />
          <path d="M26 3l3-1.500v4zM24 10l4-2v4z" fill="#4a9fce" />
          <path d="M40 2h10v10H40zM43.300 2v10M46.600 2v10M40 5.300h10M40 8.600h10" stroke="#999" strokeWidth=".9" />
          <path d="M63 1v12M57 7h12" stroke="#888" strokeWidth="1.200" strokeDasharray="3 1" />
          <path d="M58 2h4v4h-4z" fill="#c2e2c0" />
          <path d="M77.500 11V3l4.500 7V3" stroke="#4a8fc0" strokeWidth="1.600" />
          <path d="M85 1.500c4 2 4 9 0 11M85.500 4v6" stroke="#4a9fce" strokeWidth="1.400" />
        </svg>
        <div className="ml-[3px] h-[13px] w-px bg-[#bbb]" />
        <span className="ml-[281px]">124.2907495°W 41.4762895°N</span>
        <svg viewBox="0 0 8 6" className="ml-[9px] h-[6px] w-[8px]" fill="none" stroke="#555" strokeWidth="1.600"><path d="M.8.800L4 4.500 7.200.800" /></svg>
        <div className="ml-auto h-[13px] w-px bg-[#ccc]" />
        <svg viewBox="0 0 14 13" className="ml-[6px] h-[13px] w-[14px]" fill="none" stroke="#a9a9a9">
          <path d="M5 1h8v4l-2 2v3H9" />
          <circle cx="5" cy="7" r="3.300" fill="#dce9f2" />
          <path d="M3 10l-2 2.500M5 5.500v3M3.500 7h3" />
        </svg>
        <span className="ml-[3px] w-[91px] whitespace-nowrap tracking-[-0.180px] text-[#a6a6a6]">Selected Features: 0</span>
        <div className="ml-[2px] h-[13px] w-px bg-[#bbb]" />
        <div className="ml-[8px] flex gap-[3px]"><span className="h-[12px] w-[3px] bg-[#666]" /><span className="h-[12px] w-[3px] bg-[#666]" /></div>
        <div className="ml-[9px] h-[13px] w-px bg-[#bbb]" />
        <svg viewBox="0 0 14 14" className="ml-[4px] mr-[2px] h-[14px] w-[14px]" fill="none" stroke="#3d93c9" strokeWidth="2">
          <path d="M1.500 6C2 3 4.500 1.500 7 1.500c2 0 3.500 1 4.500 2.500M12.500 8c-.5 3-3 4.500-5.500 4.500-2 0-3.500-1-4.500-2.500" />
          <path d="M13 .5v5H8zM1 13.500v-5h5z" fill="#3d93c9" stroke="none" />
        </svg>
      </div>
    </div>
  );
}

/* ---------- geoprocessing pane ---------- */

const Field = ({ v, w, right }: { v: string; w: string; right?: boolean }) => (
  <div className={"flex h-full shrink-0 items-center border border-[#b4b4b4] bg-white text-[10px] tracking-[-0.350px] " + w + (right ? " justify-end px-[1px]" : " px-[4px]")}>{v}</div>
);

const XY = ({ x, y }: { x: string; y: string }) => (
  <div className="flex h-[19px] items-center">
    <span className="w-[9px]">X</span>
    <Field v={x} w="w-[115px]" right />
    <span className="ml-[7px] w-[10px]">Y</span>
    <Field v={y} w="w-[109px]" right />
  </div>
);

const Arrow = ({ turn }: { turn: string }) => (
  <svg viewBox="0 0 9 9" className={"size-[9px] shrink-0 " + turn} fill="#444">
    <path d="M0 4.500L4.200.8v2.500H9v2.400H4.200v2.500z" />
  </svg>
);

const Label = ({ children, h }: { children: string; h: string }) => (
  <div className={"flex items-end whitespace-nowrap leading-[12px] " + h}>{children}</div>
);

function Geoprocessing() {
  return (
    <div className="ml-[4px] flex w-[272px] shrink-0 flex-col pt-[8px]">
      <div className="flex h-[833px] flex-col border-b border-l border-[#d0d0d0] border-t-[4px] border-t-[#c6c6c6] bg-[#f7f7f7] text-[10px] tracking-[-0.100px] text-[#555]">
        <div className="flex h-[17px] items-center justify-between pl-[4px] pr-[4px]">
          <span className="text-[13.500px] tracking-[-0.350px] text-[#777]">Geoprocessing</span>
          <PaneButtons className="-mt-[3px]" />
        </div>
        <div className="mt-[12px] flex h-[18px] items-center justify-between pl-[6px] pr-[4px]">
          <svg viewBox="0 0 16 16" className="size-[16px]" fill="none" stroke="#6f6f6f" strokeWidth="1.100">
            <circle cx="8" cy="8" r="7.300" />
            <path d="M12 8H4.500M7.500 4.800L4.300 8l3.200 3.200" strokeWidth="1.500" />
          </svg>
          <span className="text-[12.500px] tracking-[-0.300px] text-[#555]">Create Fishnet</span>
          <svg viewBox="0 0 16 16" className="size-[16px]" fill="none" stroke="#6f6f6f" strokeWidth="1.100">
            <circle cx="8" cy="8" r="7.300" />
            <path d="M8 3.500v9M3.500 8h9" strokeWidth="1.500" />
          </svg>
        </div>
        <div className="mt-[10px] flex h-[20px] items-start pl-[7px] pr-[4px] text-[11px] leading-[18px]">
          <span className="h-[21px] w-[59px] whitespace-nowrap border-b-2 border-[#1478b8] font-semibold tracking-[-0.280px] text-[#555]">Parameters</span>
          <span className="ml-[9px] tracking-[-0.200px]">Environments</span>
          <svg viewBox="0 0 15 15" className="ml-auto mt-[2px] size-[15px]" fill="none" stroke="#4a9bd0">
            <circle cx="7.500" cy="7.500" r="6.800" fill="#e2f1fb" />
            <path d="M5.300 5.800c0-3 4.400-2.800 4.400-.2 0 1.600-2.200 1.700-2.200 3.400M7.500 10.400v1.400" strokeWidth="1.500" />
          </svg>
        </div>
        <div className="mt-[9px] flex w-[265px] flex-col pl-[15px] pt-px">
          <Label h="h-[12px]">Output Feature Class</Label>
          <div className="flex h-[18px] items-center">
            <Field v="fishnet.shp" w="w-[227px]" />
            <svg viewBox="0 0 14 11" className="ml-[6px] h-[11px] w-[14px]">
              <path d="M.5 10.500V1.500h5l1 1.500h6v2" fill="#c9b02e" />
              <path d="M.5 10.500L3 4.500h11l-2 6z" fill="#e7d15a" />
            </svg>
          </div>
          <Label h="h-[16px]">Fishnet Origin Coordinate</Label>
          <div className="h-px" />
          <XY x="-124.48201686078" y="38.0184260107558" />
          <div className="mt-[4px] flex h-[18px] items-center justify-between">
            Template Extent
            <div className="flex h-full w-[125px] items-center justify-between border border-[#b4b4b4] bg-white pl-[1px] pr-[2px] text-[10.500px] tracking-[-0.150px]">As Specified Below<Caret className="text-[#333]" /></div>
          </div>
          <div className="mt-[4px] flex h-[18px] items-center">
            <span className="w-[12px] pl-px"><Arrow turn="" /></span>
            <Field v="-124.48201686078" w="w-[112px]" />
            <span className="ml-[4px] w-[10px]"><Arrow turn="rotate-180" /></span>
            <Field v="-119.877260950292" w="w-[111px]" />
          </div>
          <div className="mt-[2px] flex h-[18px] items-center">
            <span className="w-[12px] pl-px"><Arrow turn="-rotate-90" /></span>
            <Field v="38.0184260107558" w="w-[112px]" />
            <span className="ml-[4px] w-[10px]"><Arrow turn="rotate-90" /></span>
            <Field v="42.0095082696719" w="w-[111px]" />
          </div>
          <Label h="h-[16px]">Y-Axis Coordinate</Label>
          <div className="h-px" />
          <XY x="-124.48201686078" y="48.0184260107558" />
          <div className="mt-[3px] flex h-[18px] items-center justify-between">Cell Size Width<Field v="0.04347826" w="w-[125px]" right /></div>
          <div className="mt-[4px] flex h-[18px] items-center justify-between">Cell Size Height<Field v="0.04347826" w="w-[125px]" right /></div>
          <Label h="h-[16px]">Opposite corner of Fishnet</Label>
          <XY x="-119.877260950292" y="42.0095082696719" />
          <div className="flex h-[19px] items-center gap-[4px]"><Check on />Create Label Points</div>
          <Label h="h-[14px]">Geometry Type</Label>
          <div className="mt-px flex h-[18px] items-center justify-between border border-[#b4b4b4] bg-white pl-[4px] pr-[2px] text-[10.500px]">Polygon<Caret className="text-[#333]" /></div>
        </div>
        <div className="mb-[5px] ml-auto mr-[5px] mt-auto flex h-[21px] w-[70px] items-center border border-[#8a8a8a] bg-white pl-[9px] text-[10.500px] text-[#444]">
          <svg viewBox="0 0 14 14" className="mr-[6px] size-[14px]" fill="#d4ebf8" stroke="#5aa4d2">
            <circle cx="7" cy="7" r="6.400" />
            <path d="M5.500 3.800L10 7l-4.500 3.200z" fill="#2f83bd" stroke="none" />
          </svg>
          Run
          <Caret className="ml-auto mr-[2px] w-[4px]! h-[3px]!" />
        </div>
      </div>
      <div className="flex h-[18px] items-center text-[10.500px] tracking-[-0.350px]">
        <span className="w-[45px] pl-[5px] tracking-[-0.200px] text-[#555]">Catalog</span>
        <span className="-mt-[2px] flex h-[19px] w-[76px] items-center justify-center border border-t-0 border-[#d4d4d4] bg-[#f7f7f7] pt-px text-[#2b7cb3]">Geoprocessing</span>
      </div>
    </div>
  );
}

export default function App() {
  return (
    <div className="h-[967px] w-[1630px] overflow-hidden bg-[#f0f0f0] font-['Open_Sans','Noto_Sans','Noto_Sans_CJK_SC',sans-serif]">
      <div className="flex h-[105px] w-full bg-white">
        <div className="bg-[#f0f0f0]">
          <Ribbon />
        </div>
      </div>
      <div className="flex">
        <div className="pl-[6px] pt-[6px]">
          <Contents />
        </div>
        <MapView />
        <Geoprocessing />
      </div>
    </div>
  );
}
